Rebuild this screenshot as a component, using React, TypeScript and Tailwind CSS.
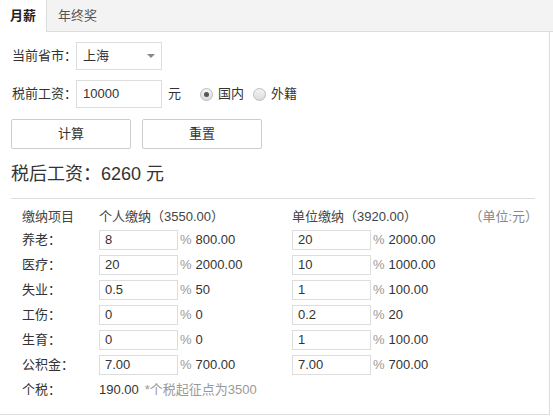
import React, { useState } from 'react';

const FONT = { fontFamily: '"Liberation Sans", Arial, "Noto Sans CJK SC", sans-serif' };

const ROWS = [
  { label: '养老：', p: '8', pv: '800.00', u: '20', uv: '2000.00' },
  { label: '医疗：', p: '20', pv: '2000.00', u: '10', uv: '1000.00' },
  { label: '失业：', p: '0.5', pv: '50', u: '1', uv: '100.00' },
  { label: '工伤：', p: '0', pv: '0', u: '0.2', uv: '20' },
  { label: '生育：', p: '0', pv: '0', u: '1', uv: '100.00' },
  { label: '公积金：', p: '7.00', pv: '700.00', u: '7.00', uv: '700.00' },
];

function Radio({ checked }: { checked?: boolean }) {
  return (
    <span className="w-[13px] h-[13px] rounded-full border border-[#bbb] bg-gradient-to-b from-[#f4f4f4] to-[#dcdcdc] flex items-center justify-center">
      {checked && <span className="w-[5px] h-[5px] rounded-full bg-[#555]" />}
    </span>
  );
}

function Cell({ value, amount }: { value: string; amount: string }) {
  return (
    <div className="flex items-center">
      <div className="w-[79px] h-[20px] border border-[#ddd] pl-[5px] flex items-center text-[#333]">{value}</div>
      <span className="ml-[2px] text-[#999]">%</span>
      <span className="ml-[4px] text-[#333]">{amount}</span>
    </div>
  );
}

export default function App() {
  const [tab, setTab] = useState<'month' | 'year'>('month');

  return (
    <div className="w-[553px] h-[416px] bg-white text-[13px] text-[#333] whitespace-nowrap" style={FONT}>
      {/* Tabs */}
      <div className="flex h-[32px] bg-[#f3f3f3] border-b border-[#ddd]">
        <button
          onClick={() => setTab('month')}
          className={tab === 'month' ? 'w-[47px] h-[32px] bg-white border-r border-[#ddd] font-bold text-[#222] text-[13px]' : 'w-[47px] text-[#555]'}
        >
          月薪
        </button>
        <button onClick={() => setTab('year')} className="px-[11px] text-[13px] text-[#555]">
          年终奖
        </button>
      </div>

      <div className="w-[550px] h-[383px] border-r border-b border-[#ddd] pt-[10px] px-[11px]">
        <div className="flex items-center h-[28px]">
          <span className="w-[65px] shrink-0 pl-[1px]">当前省市：</span>
          <div className="w-[86px] h-[28px] border border-[#ddd] flex items-center justify-between pl-[6px] pr-[6px]">
            <span>上海</span>
            <span className="w-0 h-0 border-l-[4px] border-r-[4px] border-t-[4px] border-l-transparent border-r-transparent border-t-[#888]" />
          </div>
        </div>

        <div className="flex items-center h-[28px] mt-[10px]">
          <span className="w-[65px] shrink-0 pl-[1px]">税前工资：</span>
          <div className="w-[86px] h-[28px] border border-[#ddd] flex items-center pl-[6px] text-[#333]">10000</div>
          <span className="ml-[6px]">元</span>
          <div className="flex items-center ml-[19px] gap-[5px]">
            <Radio checked />
            <span>国内</span>
          </div>
          <div className="flex items-center ml-[9px] gap-[5px]">
            <Radio />
            <span>外籍</span>
          </div>
        </div>

        <div className="flex gap-[11px] mt-[11px]">
          <button className="w-[120px] h-[30px] border border-[#ccc] rounded-[2px] bg-white">计算</button>
          <button className="w-[120px] h-[30px] border border-[#ccc] rounded-[2px] bg-white">重置</button>
        </div>

        <div className="text-[18px] mt-[10px] leading-[30px] text-[#333]">税后工资：6260 元</div>

        <div className="border-t border-[#ddd] mt-[9px] mr-[3px]" />

        <div className="pl-[11px] mt-[8px]">
          <div className="grid grid-cols-[77px_193px_1fr] h-[20px] items-center text-[#444]">
            <span>缴纳项目</span>
            <span>个人缴纳（3550.00）</span>
            <div className="flex justify-between">
              <span>单位缴纳（3920.00）</span>
              <span className="text-[#888]">（单位:元）</span>
            </div>
          </div>
          {ROWS.map((r) => (
            <div key={r.label} className="grid grid-cols-[77px_193px_1fr] h-[25px] items-center">
              <span>{r.label}</span>
              <Cell value={r.p} amount={r.pv} />
              <Cell value={r.u} amount={r.uv} />
            </div>
          ))}
          <div className="grid grid-cols-[77px_1fr] h-[25px] items-center">
            <span>个税：</span>
            <div>
              <span>190.00</span>
              <span className="ml-[6px] text-[#999]">*个税起征点为3500</span>
            </div>
          </div>
        </div>
      </div>
    </div>
  );
}
